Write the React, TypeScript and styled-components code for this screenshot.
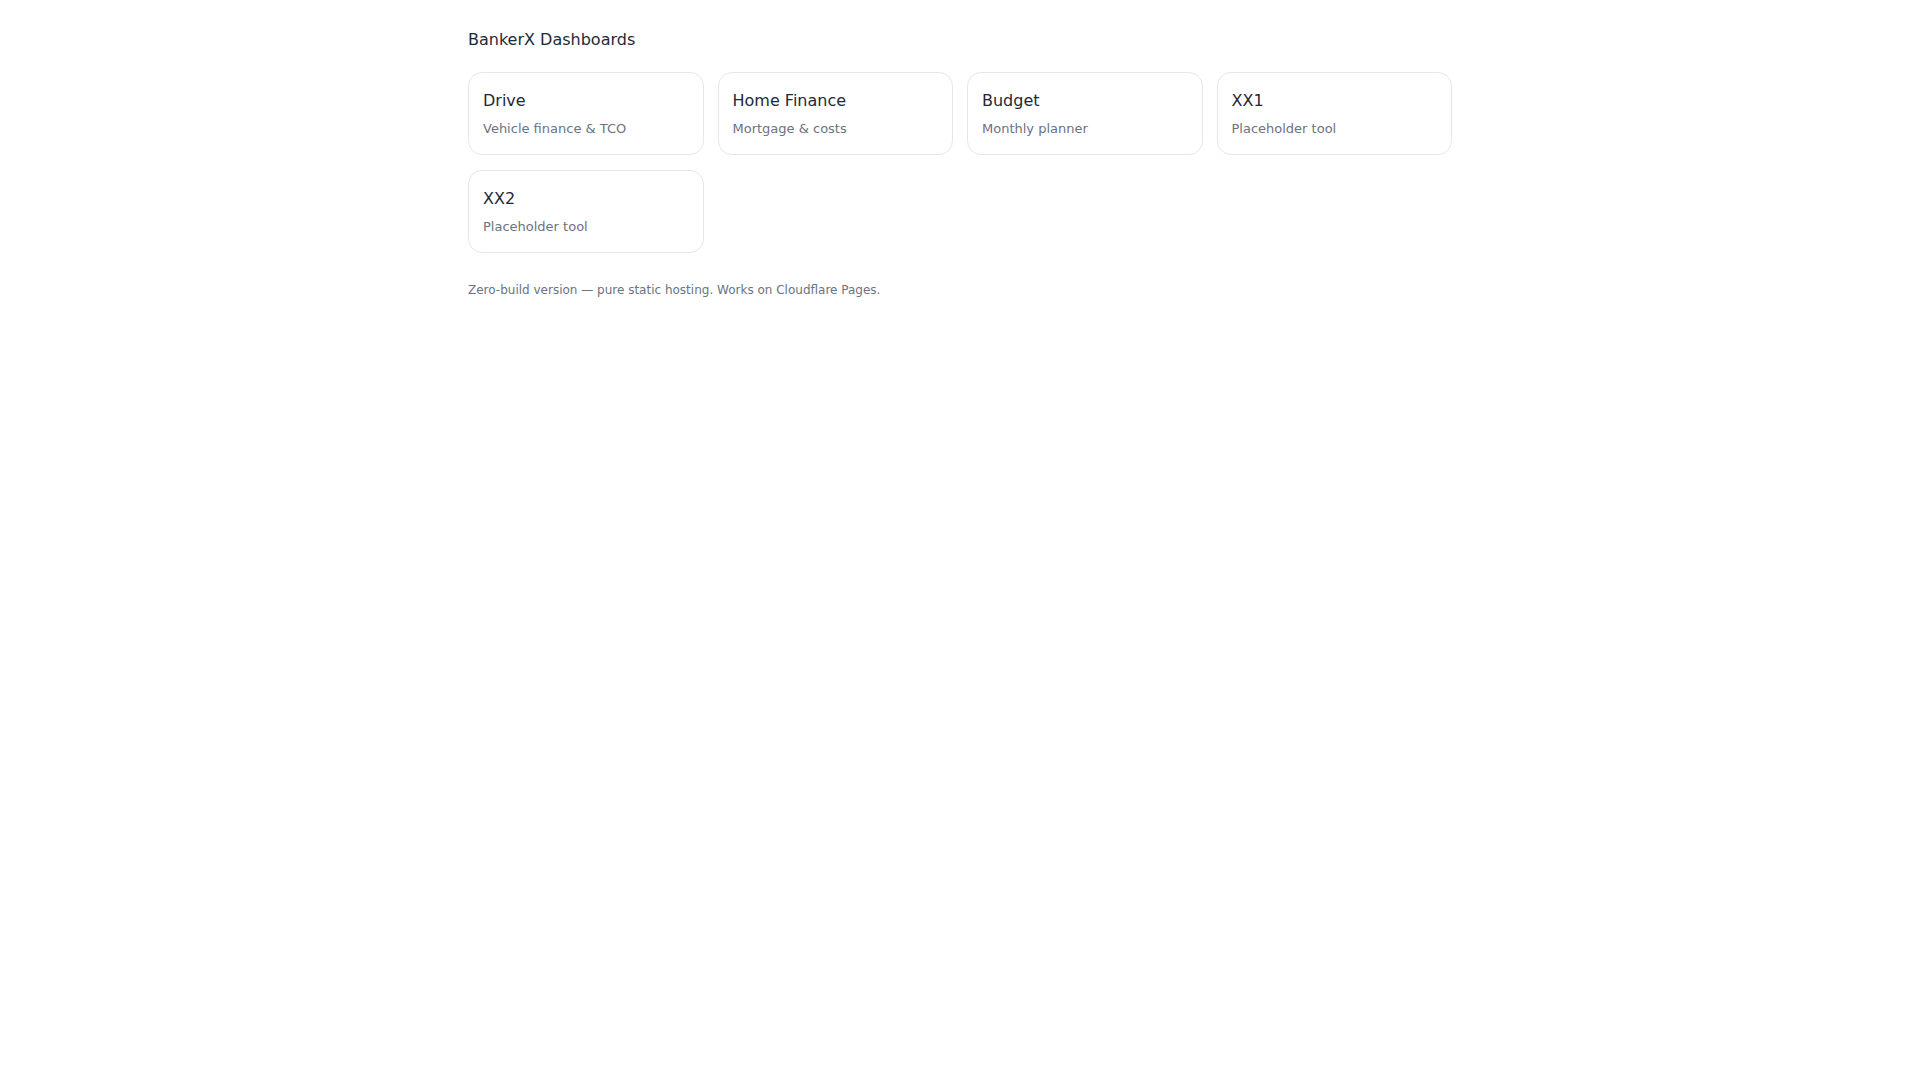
import React from "react";
import styled, { createGlobalStyle } from "styled-components";

const GlobalStyle = createGlobalStyle`
  html, body {
    margin: 0;
    padding: 0;
    background: #ffffff;
  }
  body {
    font-family: "DejaVu Sans", "Liberation Sans", sans-serif;
    color: #111827;
  }
`;

const Page = styled.main`
  max-width: 984px;
  margin: 0 auto;
  padding: 28px 0 40px;
`;

const Title = styled.h1`
  margin: 0 0 20px;
  font-size: 16px;
  line-height: 24px;
  font-weight: 400;
  color: #1f2937;
`;

const Grid = styled.div`
  display: grid;
  grid-template-columns: repeat(4, 1fr);
  gap: 15px 14px;
`;

const Card = styled.a`
  display: block;
  padding: 16px 14px;
  border: 1px solid #e5e7eb;
  border-radius: 14px;
  background: #ffffff;
  text-decoration: none;
  color: inherit;
`;

const CardTitle = styled.div`
  font-size: 16px;
  line-height: 24px;
  color: #1f2937;
`;

const CardSub = styled.div`
  margin-top: 6px;
  font-size: 13px;
  line-height: 19px;
  color: #6b7280;
`;

const Footer = styled.p`
  margin: 28px 0 0;
  font-size: 12px;
  line-height: 18px;
  color: #6b7280;
`;

const tools = [
  { name: "Drive", desc: "Vehicle finance & TCO" },
  { name: "Home Finance", desc: "Mortgage & costs" },
  { name: "Budget", desc: "Monthly planner" },
  { name: "XX1", desc: "Placeholder tool" },
  { name: "XX2", desc: "Placeholder tool" },
];

export default function App() {
  return (
    <>
      <GlobalStyle />
      <Page>
        <Title>BankerX Dashboards</Title>
        <Grid>
          {tools.map((t) => (
            <Card key={t.name} href="#">
              <CardTitle>{t.name}</CardTitle>
              <CardSub>{t.desc}</CardSub>
            </Card>
          ))}
        </Grid>
        <Footer>
          Zero-build version — pure static hosting. Works on Cloudflare Pages.
        </Footer>
      </Page>
    </>
  );
}
